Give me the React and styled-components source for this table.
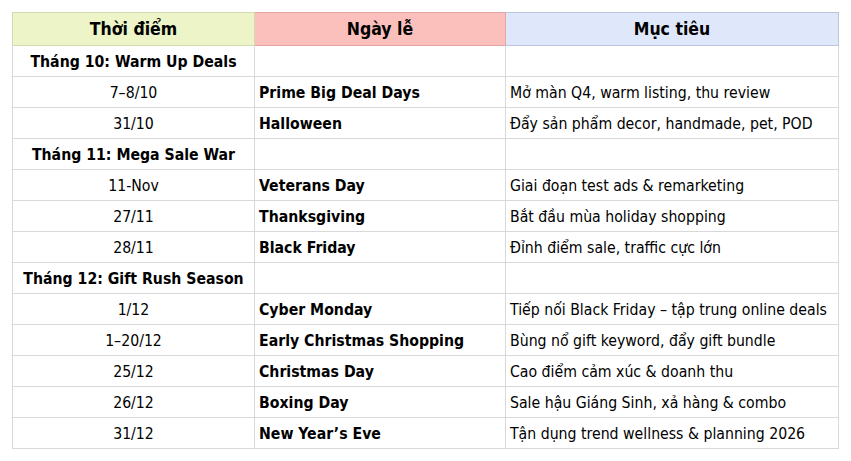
import styled, { createGlobalStyle } from "styled-components";

const GlobalStyle = createGlobalStyle`
  html, body {
    margin: 0;
    padding: 0;
    background: #ffffff;
  }
  body {
    font-family: "DejaVu Sans Condensed", "DejaVu Sans", Tahoma, sans-serif;
    color: #000;
  }
`;

const Page = styled.div`
  padding: 12px 0 0 12px;
`;

const Table = styled.table`
  border-collapse: collapse;
  border-spacing: 0;
  table-layout: fixed;
  width: 826px;
  font-size: 15.7px;
`;

const headerColors = {
  time: { bg: "#ecf4c8", border: "#d3dbb2" },
  holiday: { bg: "#fbbfbc", border: "#e5a5a3" },
  goal: { bg: "#dfe7fb", border: "#b9c4dd" },
};

const HeaderCell = styled.th`
  height: 32px;
  padding: 0 4px;
  text-align: center;
  font-weight: bold;
  font-size: 17.5px;
  background: ${(p) => headerColors[p.$kind].bg};
  border: 1px solid ${(p) => headerColors[p.$kind].border};
`;

const Row = styled.tr`
  height: 31px;
`;

const Cell = styled.td`
  height: 30px;
  padding: 0 4px;
  border: 1px solid #d9d9d9;
  white-space: nowrap;
  overflow: hidden;
  text-align: ${(p) => (p.$center ? "center" : "left")};
  font-weight: ${(p) => (p.$bold ? "bold" : "normal")};
`;

const rows = [
  { month: "Tháng 10: Warm Up Deals" },
  { date: "7–8/10", name: "Prime Big Deal Days", goal: "Mở màn Q4, warm listing, thu review" },
  { date: "31/10", name: "Halloween", goal: "Đẩy sản phẩm decor, handmade, pet, POD" },
  { month: "Tháng 11: Mega Sale War" },
  { date: "11-Nov", name: "Veterans Day", goal: "Giai đoạn test ads & remarketing" },
  { date: "27/11", name: "Thanksgiving", goal: "Bắt đầu mùa holiday shopping" },
  { date: "28/11", name: "Black Friday", goal: "Đỉnh điểm sale, traffic cực lớn" },
  { month: "Tháng 12: Gift Rush Season" },
  { date: "1/12", name: "Cyber Monday", goal: "Tiếp nối Black Friday – tập trung online deals" },
  { date: "1–20/12", name: "Early Christmas Shopping", goal: "Bùng nổ gift keyword, đẩy gift bundle" },
  { date: "25/12", name: "Christmas Day", goal: "Cao điểm cảm xúc & doanh thu" },
  { date: "26/12", name: "Boxing Day", goal: "Sale hậu Giáng Sinh, xả hàng & combo" },
  { date: "31/12", name: "New Year’s Eve", goal: "Tận dụng trend wellness & planning 2026" },
];

export default function App() {
  return (
    <>
      <GlobalStyle />
      <Page>
        <Table>
          <colgroup>
            <col style={{ width: 242 }} />
            <col style={{ width: 251 }} />
            <col style={{ width: 333 }} />
          </colgroup>
          <thead>
            <tr>
              <HeaderCell $kind="time">Thời điểm</HeaderCell>
              <HeaderCell $kind="holiday">Ngày lễ</HeaderCell>
              <HeaderCell $kind="goal">Mục tiêu</HeaderCell>
            </tr>
          </thead>
          <tbody>
            {rows.map((r, i) =>
              r.month ? (
                <Row key={i}>
                  <Cell $center $bold>{r.month}</Cell>
                  <Cell />
                  <Cell />
                </Row>
              ) : (
                <Row key={i}>
                  <Cell $center>{r.date}</Cell>
                  <Cell $bold>{r.name}</Cell>
                  <Cell>{r.goal}</Cell>
                </Row>
              )
            )}
          </tbody>
        </Table>
      </Page>
    </>
  );
}
